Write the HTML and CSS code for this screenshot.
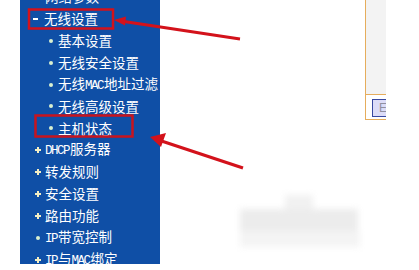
FILE: index.html
```html
<!DOCTYPE html>
<html lang="zh">
<head>
<meta charset="utf-8">
<link rel="stylesheet" href="styles.css">
</head>
<body>
<div class="page">
  <div class="gutter"></div>
  <nav class="menu">
    <ul class="list">
      <li class="item top"><span class="mark plus"></span><span class="label">网络参数</span></li>
      <li class="item top open"><span class="mark minus"></span><span class="label">无线设置</span></li>
      <li class="item sub"><span class="mark dot"></span><span class="label">基本设置</span></li>
      <li class="item sub"><span class="mark dot"></span><span class="label">无线安全设置</span></li>
      <li class="item sub"><span class="mark dot"></span><span class="label">无线<span class="lat">MAC</span>地址过滤</span></li>
      <li class="item sub"><span class="mark dot"></span><span class="label">无线高级设置</span></li>
      <li class="item sub"><span class="mark dot"></span><span class="label">主机状态</span></li>
      <li class="item top"><span class="mark plus"></span><span class="label"><span class="lat">DHCP</span>服务器</span></li>
      <li class="item top"><span class="mark plus"></span><span class="label">转发规则</span></li>
      <li class="item top"><span class="mark plus"></span><span class="label">安全设置</span></li>
      <li class="item top"><span class="mark plus"></span><span class="label">路由功能</span></li>
      <li class="item top"><span class="mark dot big"></span><span class="label"><span class="lat">IP</span>带宽控制</span></li>
      <li class="item top"><span class="mark plus"></span><span class="label"><span class="lat">IP</span>与<span class="lat">MAC</span>绑定</span></li>
    </ul>
  </nav>
  <main class="content">
    <div class="frame">
      <div class="frame-top"></div>
      <div class="frame-bottom"><span class="btn">E</span></div>
    </div>
  </main>
</div>
<div class="smudge">
  <div class="s1"></div>
  <div class="s2"></div>
  <div class="s3"></div>
</div>
<svg class="notes" width="419" height="270" viewBox="0 0 419 270">
  <rect x="29" y="9.5" width="84" height="19" fill="none" stroke="#d3121b" stroke-width="2.5"/>
  <rect x="35.5" y="115.5" width="97" height="21" fill="none" stroke="#c8141e" stroke-width="2.5"/>
  <line x1="240" y1="39" x2="124" y2="21.5" stroke="#d3121b" stroke-width="3"/>
  <polygon points="114,20 126,16.5 125,25.5" fill="#d3121b"/>
  <line x1="243" y1="168" x2="160" y2="140.5" stroke="#d3121b" stroke-width="3.2"/>
  <polygon points="150,137 166,133 161,147" fill="#d3121b"/>
</svg>
</body>
</html>
```
FILE: styles.css
```css
html, body {
  margin: 0;
  padding: 0;
  background: #ffffff;
}
body {
  width: 419px;
  height: 270px;
  overflow: hidden;
  position: relative;
}
.page {
  display: flex;
  height: 270px;
}
.gutter {
  width: 20px;
  flex: none;
}
.menu {
  width: 140px;
  height: 264px;
  flex: none;
  background: #0f4fa6;
  overflow: hidden;
}
.list {
  list-style: none;
  margin: -14px 0 0 0;
  padding: 0;
}
.item {
  height: 21.9px;
  display: flex;
  align-items: center;
  color: #ffffff;
  font-family: "Noto Sans CJK SC", "Noto Sans", sans-serif;
  font-size: 13.5px;
  white-space: nowrap;
}
.label {
  line-height: 1;
}
.lat {
  font-family: "Liberation Mono", monospace;
  font-size: 12.5px;
  letter-spacing: -1.5px;
  margin-right: 1px;
}
.top {
  padding-left: 15px;
}
.sub {
  padding-left: 29px;
}
.mark {
  display: inline-block;
  flex: none;
}
.plus {
  width: 6px;
  height: 6px;
  margin-right: 4px;
  background:
    linear-gradient(#f4efc4, #f4efc4) center / 6px 2px no-repeat,
    linear-gradient(#f4efc4, #f4efc4) center / 2px 6px no-repeat;
}
.minus {
  width: 5px;
  height: 2px;
  background: #ffffff;
  margin-left: -2px;
  margin-right: 6px;
}
.dot {
  width: 4px;
  height: 4px;
  border-radius: 50%;
  background: #d9f0d0;
  margin-right: 5px;
}
.dot.big {
  margin-left: 1px;
}
.content {
  flex: 1;
  position: relative;
}
.frame {
  margin-left: 205px;
  width: 21px;
  height: 120px;
  border-left: 1px solid #e6ad5c;
  border-bottom: 1px solid #e6ad5c;
  box-sizing: border-box;
  display: flex;
  flex-direction: column;
  overflow: hidden;
}
.frame-top {
  height: 94px;
  background: #f3f3f3;
  border-bottom: 1px solid #e6ad5c;
  flex: none;
}
.frame-bottom {
  flex: 1;
  padding: 4px 0 0 6px;
}
.btn {
  display: block;
  width: 24px;
  height: 16px;
  background: #dcdcf8;
  border: 1px solid #3848a0;
  color: #9090a0;
  font-family: "Liberation Sans", sans-serif;
  font-size: 12px;
  line-height: 16px;
  padding-left: 6px;
}
.smudge {
  position: absolute;
  left: 240px;
  top: 195px;
  width: 120px;
  height: 55px;
  filter: blur(3px);
}
.s1 {
  position: absolute;
  left: 45px;
  top: 0;
  width: 28px;
  height: 18px;
  background: #f1f1f1;
}
.s2 {
  position: absolute;
  left: 0;
  top: 14px;
  width: 118px;
  height: 24px;
  background: #ececec;
}
.s3 {
  position: absolute;
  left: 0;
  top: 36px;
  width: 120px;
  height: 16px;
  background: #f4f4f4;
}
.notes {
  position: absolute;
  left: 0;
  top: 0;
  pointer-events: none;
}
```
